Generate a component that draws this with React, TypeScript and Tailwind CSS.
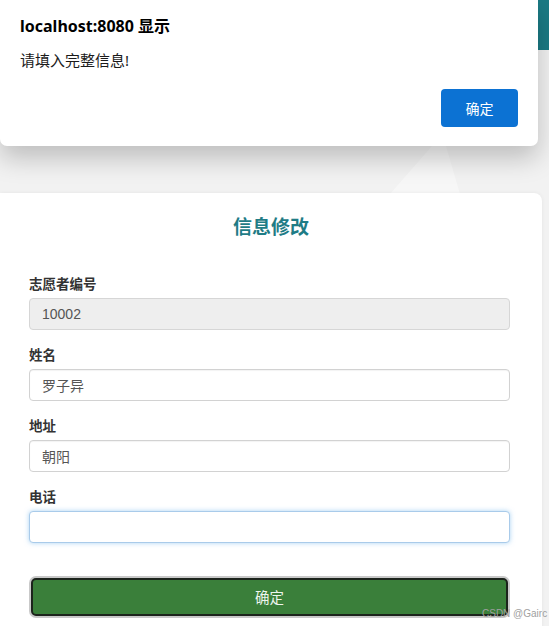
import React from "react";

function Field({
  label,
  value,
  disabled,
  focused,
}: {
  label: string;
  value: string;
  disabled?: boolean;
  focused?: boolean;
}) {
  const base =
    "h-[32px] w-full rounded-[4px] border px-[12px] text-[14px] text-[#555] outline-none [font-family:'Liberation_Sans','Noto_Sans_CJK_SC',sans-serif]";
  const cls = disabled
    ? base + " bg-[#eeeeee] border-[#d6d6d6]"
    : focused
    ? base + " bg-white border-[#a9cbea] shadow-[0_0_5px_rgba(102,175,233,0.55)]"
    : base + " bg-white border-[#d2d2d2] shadow-[inset_0_1px_1px_rgba(0,0,0,0.05)]";
  return (
    <div className="flex flex-col">
      <div className="mb-[6px] text-[13.5px] font-bold leading-[18px] text-[#333]">{label}</div>
      <input className={cls} defaultValue={value} disabled={disabled} readOnly />
    </div>
  );
}

export default function App() {
  return (
    <div className="relative h-[626px] w-[549px] overflow-hidden bg-[#f2f2f2] [font-family:'Noto_Sans','Noto_Sans_CJK_SC',sans-serif]">
      {/* page header strip peeking out */}
      <div className="absolute right-0 top-0 h-[50px] w-[11px] bg-[#1b7a84]" />
      {/* faint background decoration */}
      <div className="absolute left-[390px] top-[146px] h-[48px] w-[70px] bg-white/40 [clip-path:polygon(0_100%,60%_0,80%_0,100%_100%)]" />

      {/* card */}
      <div className="relative mt-[193px] w-[542px] rounded-tr-[8px] bg-white px-[29px] pb-[20px] pt-[19px] shadow-[0_0_4px_rgba(0,0,0,0.06)] [font-family:'Noto_Sans_CJK_SC',sans-serif]">
        <h2 className="text-center text-[19px] font-bold leading-[28px] text-[#1f7c86]">信息修改</h2>
        <div className="mt-[34px] flex flex-col gap-[15px] pr-[3px]">
          <Field label="志愿者编号" value="10002" disabled />
          <Field label="姓名" value="罗子异" />
          <Field label="地址" value="朝阳" />
          <Field label="电话" value="" focused />
        </div>
        <div className="mt-[35px] pr-[3px]">
          <button className="mx-[2px] flex h-[38px] w-[477px] items-center justify-center rounded-[5px] border-2 border-[#1c241c] bg-[#3a7f3a] text-[14.5px] text-[#eef5ee] shadow-[0_0_0_2px_#c9c9c9]">
            确定
          </button>
        </div>
      </div>

      {/* alert dialog */}
      <div className="absolute left-0 top-0 h-[146px] w-[538px] rounded-b-[7px] bg-white shadow-[0_12px_26px_rgba(0,0,0,0.22)]">
        <div className="flex h-full flex-col px-[20px] pt-[14px]">
          <div className="text-[16px] font-bold leading-[24px] text-black">localhost:8080 显示</div>
          <div className="mt-[11px] text-[15px] leading-[22px] text-[#1a1a1a]">请填入完整信息!</div>
          <div className="mt-[18px] flex justify-end">
            <button className="h-[38px] w-[77px] rounded-[4px] bg-[#0c72d3] text-[14px] text-white">
              确定
            </button>
          </div>
        </div>
      </div>

      {/* watermark */}
      <div className="absolute left-[482px] top-[606px] whitespace-nowrap text-[10px] text-[#a0a0a0] [font-family:'Liberation_Sans',sans-serif]">
        CSDN @Gairc
      </div>
    </div>
  );
}
